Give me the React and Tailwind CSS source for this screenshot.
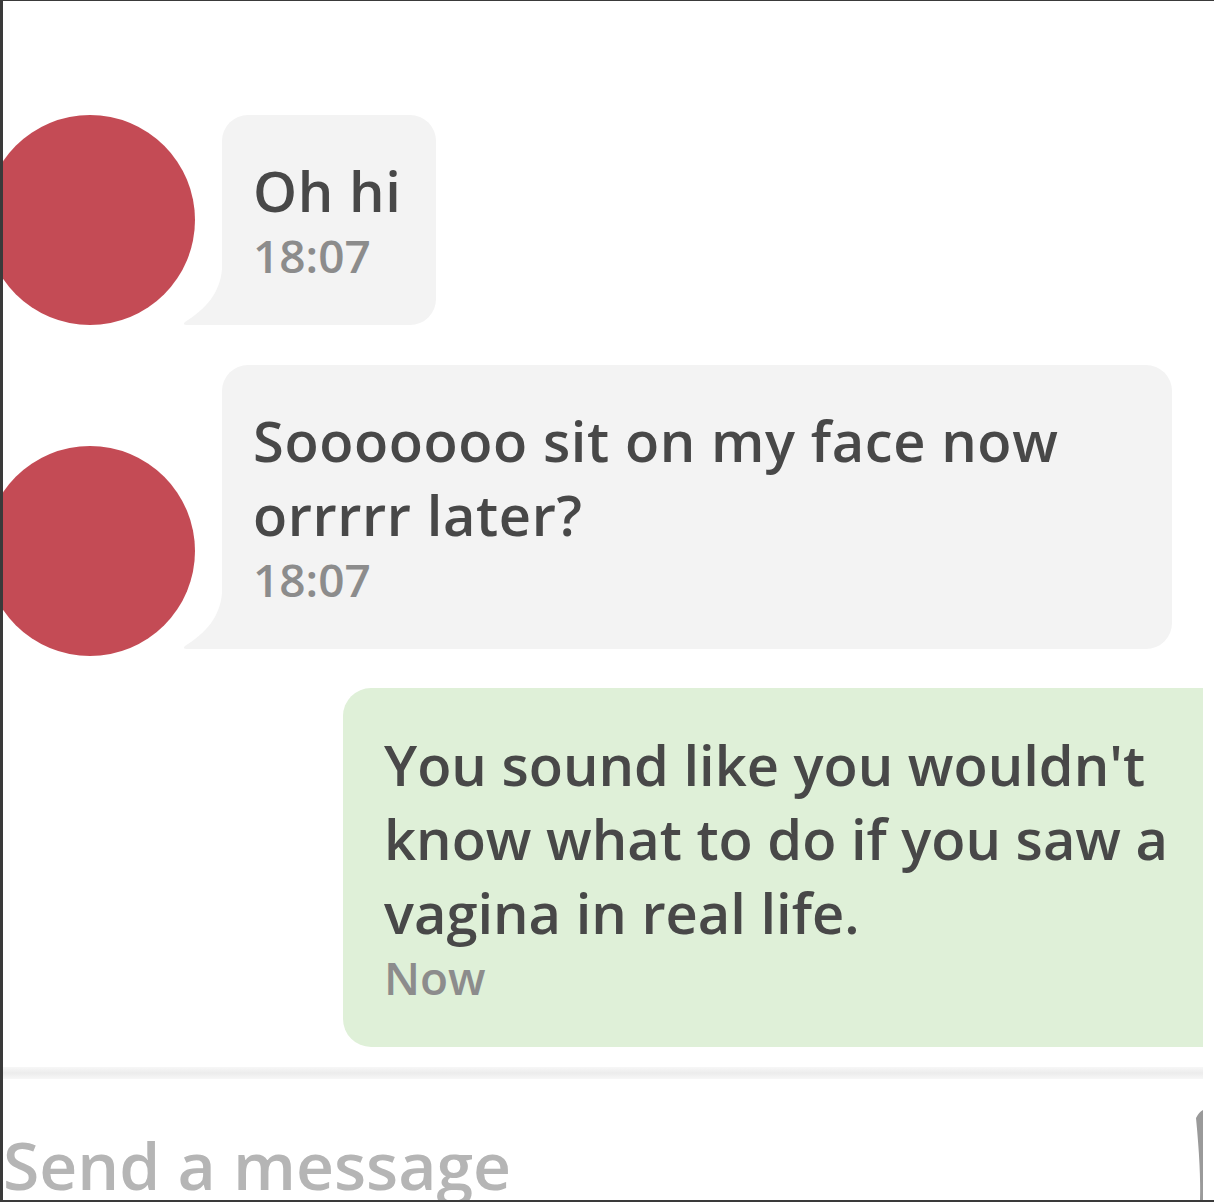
const Avatar = ({ className = '' }) => (
  <div className={`w-[210px] h-[210px] shrink-0 rounded-full bg-[#c44b55] -ml-[18px] ${className}`} />
);

const Tail = () => (
  <svg
    className="absolute left-[-40px] bottom-0"
    width="42"
    height="56"
    viewBox="0 0 42 56"
  >
    <path d="M42 0 V56 H5 Q0 56 3 53 C24 40 38 24 40 0 Z" fill="#f3f3f3" />
  </svg>
);

const ReceivedBubble = ({ lines, time, width, className = '' }) => (
  <div className={`relative bg-[#f3f3f3] rounded-[26px] rounded-bl-none pl-[31px] pt-[38px] pb-[42px] ml-[27px] ${width} ${className}`}>
    <Tail />
    <div className="text-[56px] leading-[74px] tracking-[0.6px] text-[#484848] font-semibold whitespace-nowrap">
      {lines.map((line, i) => (
        <div key={i}>{line}</div>
      ))}
    </div>
    <div className="text-[46px] leading-[56px] text-[#8c8c8c] font-semibold">{time}</div>
  </div>
);

export default function App() {
  return (
    <div
      className="w-[1214px] h-[1202px] bg-white overflow-hidden border-l-[3px] border-t border-b-2 border-[#3a3a3a]"
      style={{ fontFamily: '"Open Sans", Lato, sans-serif' }}
    >
      <div className="w-[1200px] h-full flex flex-col">
        {/* Messages */}
        <div className="flex flex-col pt-[114px]">
          <div className="flex items-end">
            <Avatar />
            <ReceivedBubble lines={['Oh hi']} time="18:07" width="w-[214px]" />
          </div>

          <div className="flex items-end mt-[40px]">
            <Avatar />
            <ReceivedBubble
              lines={['Sooooooo sit on my face now', 'orrrrr later?']}
              time="18:07"
              width="w-[950px]"
              className="mb-[7px]"
            />
          </div>

          <div className="flex justify-end mt-[32px]">
            <div className="w-[860px] bg-[#dff0d8] rounded-l-[28px] pl-[41px] pt-[39px] pb-[42px]">
              <div className="text-[56px] leading-[74px] text-[#484848] font-semibold whitespace-nowrap">
                <div>You sound like you wouldn't</div>
                <div>know what to do if you saw a</div>
                <div>vagina in real life.</div>
              </div>
              <div className="text-[46px] leading-[56px] text-[#8c8c8c] font-semibold">Now</div>
            </div>
          </div>
        </div>

        {/* Divider */}
        <div className="mt-[20px] h-[12px] bg-gradient-to-b from-[#f7f7f7] via-[#ececec] to-[#f7f7f7]" />

        {/* Input */}
        <div className="flex-1 flex items-end justify-between">
          <div className="text-[66px] leading-none text-[#b5b5b5] font-semibold whitespace-nowrap -translate-y-[3px]">
            Send a message
          </div>
          <svg width="8" height="90" viewBox="0 0 8 90" className="self-end">
            <path d="M1 8 Q4 2 8 0 V90 H5 Q6 60 1 8 Z" fill="#9a9a9a" />
          </svg>
        </div>
      </div>
    </div>
  );
}
